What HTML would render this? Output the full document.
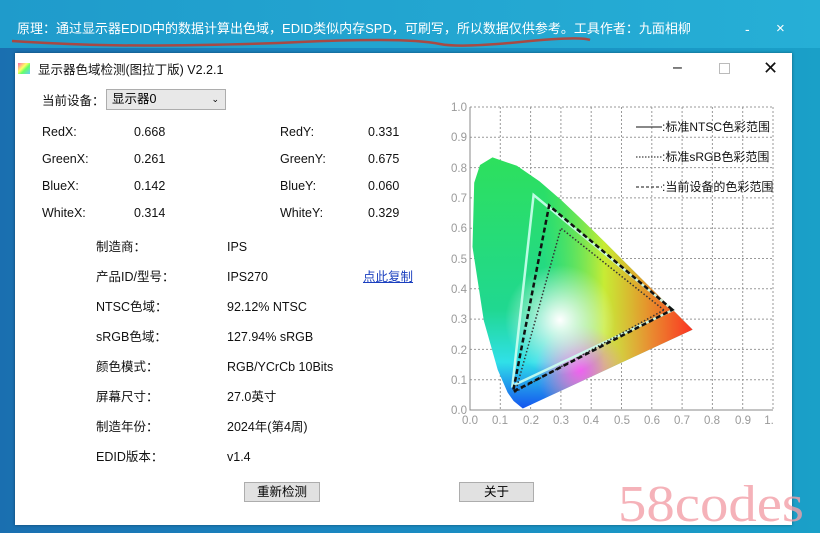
<!DOCTYPE html>
<html><head><meta charset="utf-8"><style>
body{margin:0;width:820px;height:533px;overflow:hidden;background:linear-gradient(90deg,#1a6fb0 0%,#1a86c0 40%,#1aa0c8 100%);font-family:"Liberation Sans","Noto Sans CJK SC",sans-serif;position:relative}
.top{position:absolute;left:0;top:0;width:820px;height:48px;background:linear-gradient(90deg,#1f9bcb,#26afd6)}
.t{position:absolute;white-space:nowrap;font-size:12.5px;color:#111;line-height:16px;height:16px}
.win{position:absolute;left:15px;top:53px;width:777px;height:472px;background:#fff;box-shadow:0 0 3px rgba(0,0,0,.4)}
.btn{position:absolute;background:#e1e1e1;border:1px solid #adadad;font-size:12.5px;text-align:center;line-height:18px}
</style></head><body>
<div class="top"></div>
<div class="t" style="left:17px;top:21px;color:#fff;font-size:13px">原理：通过显示器EDID中的数据计算出色域，EDID类似内存SPD，可刷写，所以数据仅供参考。工具作者：九面相柳</div>
<svg style="position:absolute;left:0;top:0" width="820" height="50"><path d="M12 41 Q60 44 100 45 T200 45 T300 42 T380 40 T440 44 T520 42 T590 40" stroke="#c0392b" stroke-width="2.5" fill="none" opacity=".85"/></svg>
<div class="t" style="left:745px;top:21px;color:#fff;font-size:14px">-</div>
<div class="t" style="left:776px;top:21px;color:#fff;font-size:15px">×</div>
<div class="win"></div>
<div style="position:absolute;left:18px;top:63px;width:12px;height:11px;background:linear-gradient(135deg,#f6a,#ff6 40%,#6f6 60%,#6cf)"></div>
<div class="t" style="left:38px;top:62px">显示器色域检测(图拉丁版) V2.2.1</div>
<div class="t" style="left:673px;top:60px;font-size:16px">–</div>
<div style="position:absolute;left:719px;top:63px;width:9px;height:9px;border:1px solid #bbb"></div>
<div class="t" style="left:763px;top:60px;font-size:18px;font-weight:300">✕</div>
<div class="t" style="left:42px;top:93px">当前设备：</div>
<div style="position:absolute;left:106px;top:89px;width:118px;height:19px;border:1px solid #adadad;background:#e8e8e8;font-size:12.5px;line-height:19px;text-indent:5px">显示器0<span style="position:absolute;right:6px;font-size:9px">⌄</span></div>
<div class="t" style="left:42px;top:124px">RedX:</div><div class="t" style="left:134px;top:124px">0.668</div><div class="t" style="left:280px;top:124px">RedY:</div><div class="t" style="left:368px;top:124px">0.331</div>
<div class="t" style="left:42px;top:151px">GreenX:</div><div class="t" style="left:134px;top:151px">0.261</div><div class="t" style="left:280px;top:151px">GreenY:</div><div class="t" style="left:368px;top:151px">0.675</div>
<div class="t" style="left:42px;top:178px">BlueX:</div><div class="t" style="left:134px;top:178px">0.142</div><div class="t" style="left:280px;top:178px">BlueY:</div><div class="t" style="left:368px;top:178px">0.060</div>
<div class="t" style="left:42px;top:205px">WhiteX:</div><div class="t" style="left:134px;top:205px">0.314</div><div class="t" style="left:280px;top:205px">WhiteY:</div><div class="t" style="left:368px;top:205px">0.329</div>
<div class="t" style="left:96px;top:239px">制造商：</div><div class="t" style="left:227px;top:239px">IPS</div>
<div class="t" style="left:96px;top:269px">产品ID/型号：</div><div class="t" style="left:227px;top:269px">IPS270</div><div class="t" style="left:363px;top:269px;color:#1a3fbf;text-decoration:underline">点此复制</div>
<div class="t" style="left:96px;top:299px">NTSC色域：</div><div class="t" style="left:227px;top:299px">92.12% NTSC</div>
<div class="t" style="left:96px;top:329px">sRGB色域：</div><div class="t" style="left:227px;top:329px">127.94% sRGB</div>
<div class="t" style="left:96px;top:359px">颜色模式：</div><div class="t" style="left:227px;top:359px">RGB/YCrCb 10Bits</div>
<div class="t" style="left:96px;top:389px">屏幕尺寸：</div><div class="t" style="left:227px;top:389px">27.0英寸</div>
<div class="t" style="left:96px;top:419px">制造年份：</div><div class="t" style="left:227px;top:419px">2024年(第4周)</div>
<div class="t" style="left:96px;top:449px">EDID版本：</div><div class="t" style="left:227px;top:449px">v1.4</div>
<div class="btn" style="left:244px;top:482px;width:74px;height:18px">重新检测</div>
<div class="btn" style="left:459px;top:482px;width:73px;height:18px">关于</div>
<svg style="position:absolute;left:0;top:0" width="820" height="533">
<defs>
<clipPath id="hs"><path d="M522.8,408.5 513.6,401 507.6,392.5 497.7,369.8 483.8,320.6 472.5,246.9 474.2,182.7 480,165 492.5,157.4 516.9,165.8 539.6,181.4 561.4,200.2 583,220.8 604.6,241.9 625.3,262.6 644.3,281.5 660,297.1 671.7,308.8 692.6,329.6Z"/></clipPath>
<linearGradient id="g1" x1="0" y1="0" x2="0" y2="1"><stop offset="0" stop-color="#2ee05a"/><stop offset=".6" stop-color="#20d890"/><stop offset=".8" stop-color="#30e0e8"/><stop offset="1" stop-color="#1040f0"/></linearGradient>
<linearGradient id="g2" x1="0" y1="0" x2="1" y2="0"><stop offset="0" stop-color="#fff" stop-opacity="0"/><stop offset=".35" stop-color="#7cf040" stop-opacity=".0"/><stop offset=".6" stop-color="#f0f020" stop-opacity=".8"/><stop offset=".8" stop-color="#ff8020" stop-opacity=".9"/><stop offset="1" stop-color="#ff2020"/></linearGradient>
<radialGradient id="w" cx="560" cy="320" r="55" gradientUnits="userSpaceOnUse"><stop offset="0" stop-color="#fff"/><stop offset="1" stop-color="#fff" stop-opacity="0"/></radialGradient>
<radialGradient id="m" cx="580" cy="370" r="45" gradientUnits="userSpaceOnUse"><stop offset="0" stop-color="#f060f0"/><stop offset="1" stop-color="#f060f0" stop-opacity="0"/></radialGradient>
</defs>
<g stroke="#999" stroke-dasharray="2,2" stroke-width="1">
<path d="M500.3 107V410M530.6 107V410M560.9 107V410M591.2 107V410M621.5 107V410M651.8 107V410M682.1 107V410M712.4 107V410M742.7 107V410M773 107V410M470 137.3H773M470 167.6H773M470 197.9H773M470 228.2H773M470 258.5H773M470 288.8H773M470 319.1H773M470 349.4H773M470 379.7H773M470 107H773"/>
</g>
<path d="M470 107V410H773" stroke="#888" fill="none"/>
<g clip-path="url(#hs)">
<rect x="460" y="150" width="240" height="265" fill="url(#g1)"/>
<rect x="460" y="150" width="240" height="265" fill="url(#g2)"/>
<rect x="460" y="150" width="240" height="265" fill="url(#m)"/>
<rect x="460" y="150" width="240" height="265" fill="url(#w)"/>
</g>
<path d="M673,310 533.6,194.9 512.4,385.8Z" fill="none" stroke="#cfe" stroke-width="2.5" opacity=".9"/>
<path d="M663.9,310 560.9,228.2 515.5,391.8Z" fill="none" stroke="#333" stroke-width="1.5" stroke-dasharray="1.5,2"/>
<path d="M672.4,309.7 549.1,205.5 513,391.8Z" fill="none" stroke="#111" stroke-width="2.5" stroke-dasharray="5,3"/>
<g font-family="Liberation Sans,sans-serif" font-size="11.5" fill="#999" text-anchor="end">
<text x="467" y="111">1.0</text><text x="467" y="141">0.9</text><text x="467" y="172">0.8</text><text x="467" y="202">0.7</text><text x="467" y="232">0.6</text><text x="467" y="263">0.5</text><text x="467" y="293">0.4</text><text x="467" y="323">0.3</text><text x="467" y="384">0.1</text><text x="467" y="354">0.2</text><text x="467" y="414">0.0</text>
</g>
<g font-family="Liberation Sans,sans-serif" font-size="11.5" fill="#999" text-anchor="middle">
<text x="470" y="424">0.0</text><text x="500" y="424">0.1</text><text x="531" y="424">0.2</text><text x="561" y="424">0.3</text><text x="591" y="424">0.4</text><text x="622" y="424">0.5</text><text x="652" y="424">0.6</text><text x="682" y="424">0.7</text><text x="712" y="424">0.8</text><text x="743" y="424">0.9</text><text x="769" y="424">1.</text>
</g>
<g font-family="Liberation Sans,Noto Sans CJK SC,sans-serif" font-size="12" fill="#111">
<path d="M636 127H662" stroke="#111"/><text x="662" y="131">:标准NTSC色彩范围</text>
<path d="M636 157H662" stroke="#111" stroke-dasharray="1.5,1.5"/><text x="662" y="161">:标准sRGB色彩范围</text>
<path d="M636 187H662" stroke="#111" stroke-dasharray="3,2"/><text x="662" y="191">:当前设备的色彩范围</text>
</g>
<text x="618" y="521" font-family="Liberation Serif,serif" font-size="52" fill="#f3a0a8" opacity=".8" textLength="186" lengthAdjust="spacingAndGlyphs">58codes</text>
</svg>
</body></html>
